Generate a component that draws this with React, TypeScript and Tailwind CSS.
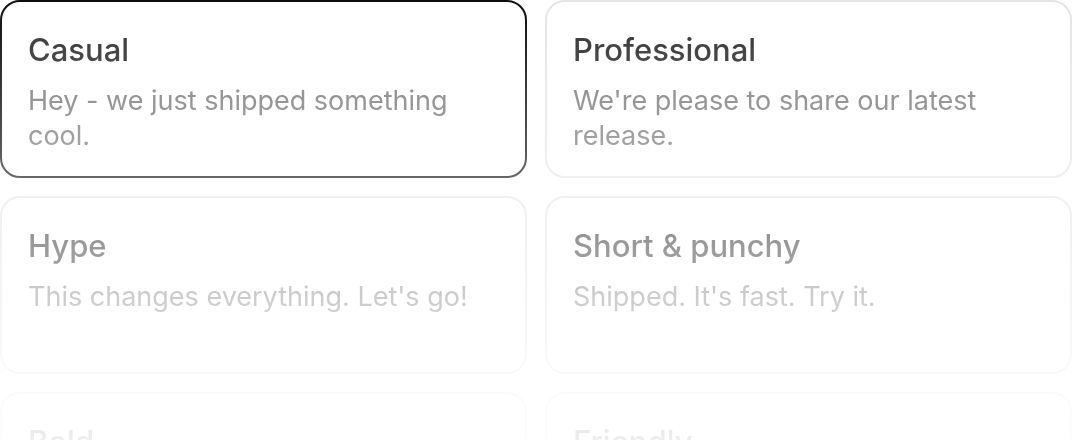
import React from 'react'

const tones = [
  { title: 'Casual', body: 'Hey - we just shipped something cool.', active: true },
  { title: 'Professional', body: "We're please to share our latest release." },
  { title: 'Hype', body: "This changes everything. Let's go!" },
  { title: 'Short & punchy', body: "Shipped. It's fast. Try it." },
  { title: 'Bold', body: 'We built the thing you asked for.' },
  { title: 'Friendly', body: 'Something new is waiting for you.' },
]

const App = () => {
  return (
    <div className="w-[1072px] h-[440px] overflow-hidden bg-white font-['Inter',sans-serif]">
      {/* fade the list out towards the bottom */}
      <div className="grid grid-cols-2 gap-[18px] [mask-image:linear-gradient(to_bottom,black_0px,transparent_480px)]">
        {tones.map((t) => (
          <div
            key={t.title}
            className={`h-[178px] rounded-[20px] border-2 bg-white px-[26px] pt-[29px] ${
              t.active ? 'border-[#0d0d0d]' : 'border-[#e5e5e5]'
            }`}
          >
            <div className="text-[31px] leading-[38px] font-medium text-[#2e2e2e]">{t.title}</div>
            <div className="mt-[14px] text-[27px] leading-[35px] text-[#7a7a7a]">{t.body}</div>
          </div>
        ))}
      </div>
    </div>
  )
}

export default App
